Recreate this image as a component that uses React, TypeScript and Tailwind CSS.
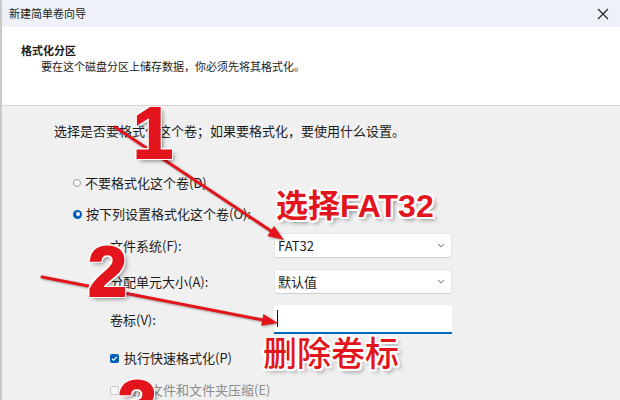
import React from 'react';

const cjk = "font-['Noto_Sans_CJK_SC','Noto_Sans',sans-serif]";
const redMark =
  "absolute text-[#e3151c] leading-none whitespace-nowrap [text-shadow:-2px_-2px_0_#fff,2px_-2px_0_#fff,-2px_2px_0_#fff,2px_2px_0_#fff,0_-2px_0_#fff,0_2px_0_#fff,-2px_0_0_#fff,2px_0_0_#fff,3px_3px_4px_rgba(0,0,0,0.45)]";
const digit = "font-['Liberation_Sans',sans-serif] font-bold [-webkit-text-stroke:2px_#e3151c]";

const Chevron = () => (
  <svg width="8" height="5" viewBox="0 0 8 5" className="text-gray-500">
    <path d="M1 1l3 3 3-3" fill="none" stroke="currentColor" strokeWidth="1" />
  </svg>
);

const Select = ({ value }: { value: string }) => (
  <div className="flex h-[25px] w-[178px] items-center justify-between rounded-[3px] border border-[#e6e6e6] border-b-[#cfcfcf] bg-white pl-[3px] pr-[6px] text-[13px] text-[#1b1b1b]">
    <span>{value}</span>
    <Chevron />
  </div>
);

const Annotations = () => (
  <>
    <svg className="pointer-events-none absolute inset-0 [filter:drop-shadow(1px_1px_1px_rgba(0,0,0,0.35))]" width="620" height="400">
      <line x1="115" y1="127" x2="271" y2="231" stroke="#e3151c" strokeWidth="3" strokeLinecap="round" />
      <polygon points="284,240 267.4,236.1 274,226.1" fill="#e3151c" />
      <line x1="42" y1="277" x2="263" y2="320" stroke="#e3151c" strokeWidth="3" strokeLinecap="round" />
      <polygon points="278,323 261.2,325.8 263.4,314" fill="#e3151c" />
    </svg>
    <div className={`${redMark} ${digit} left-[133px] top-[97px] text-[72px]`}>1</div>
    <div className={`${redMark} ${digit} left-[88px] top-[237px] text-[70px]`}>2</div>
    <div className={`${redMark} ${digit} left-[118px] top-[371px] text-[70px]`}>3</div>
    <div className={`${redMark} ${cjk} left-[276px] top-[187px] text-[32px] font-bold`}>
      选择<span className="font-['Liberation_Sans',sans-serif]">FAT32</span>
    </div>
    <div className={`${redMark} ${cjk} left-[263px] top-[335px] text-[34px] font-medium`}>删除卷标</div>
  </>
);

export default function App() {
  return (
    <div className={`relative h-[400px] w-[620px] overflow-hidden bg-[#f0f0f0] ${cjk} text-[#1b1b1b]`}>
      <div className="flex h-full">
        <div className="w-[2px] bg-[#c9c9c9]" />
        <div className="flex flex-1 flex-col">
          {/* title bar */}
          <div className="flex h-[27px] items-center justify-between bg-[#eef2f8] pl-[7px] pr-[11px]">
            <span className="text-[11px]">新建简单卷向导</span>
            <svg width="12" height="12" viewBox="0 0 12 12">
              <path d="M1 1l10 10M11 1L1 11" stroke="#222" strokeWidth="1.1" />
            </svg>
          </div>

          {/* header */}
          <div className="h-[79px] border-b border-[#d6d6d6] bg-white pl-[19px] pt-[15px] text-[11px] leading-[16px]">
            <div className="font-bold">格式化分区</div>
            <div className="pl-[20px]">要在这个磁盘分区上储存数据，你必须先将其格式化。</div>
          </div>

          {/* body */}
          <div className="flex-1 pl-[52px] pt-[15px] text-[13px] leading-[20px]">
            <div>选择是否要格式化这个卷；如果要格式化，要使用什么设置。</div>

            <div className="mt-[32px] flex items-center gap-[4px] pl-[19px]">
              <span className="h-[8px] w-[8px] rounded-full border border-[#9a9a9a] bg-white" />
              <span>不要格式化这个卷(D)</span>
            </div>
            <div className="mt-[11px] flex items-center gap-[4px] pl-[19px]">
              <span className="flex h-[9px] w-[9px] items-center justify-center rounded-full bg-[#005fb8]">
                <span className="h-[4px] w-[4px] rounded-full bg-white" />
              </span>
              <span>按下列设置格式化这个卷(O):</span>
            </div>

            <div className="mt-[9px] grid grid-cols-[164px_178px] items-center gap-y-[11px] pl-[56px]">
              <span>文件系统(F):</span>
              <Select value="FAT32" />
              <span>分配单元大小(A):</span>
              <Select value="默认值" />
              <span>卷标(V):</span>
              <div className="flex h-[29px] w-[178px] items-center rounded-t-[3px] border-b-2 border-[#0067c0] bg-white pl-[3px]">
                <span className="h-[17px] w-[1px] bg-[#111]" />
              </div>
            </div>

            <div className="mt-[14px] flex items-center gap-[5px] pl-[56px]">
              <span className="flex h-[9px] w-[9px] items-center justify-center rounded-[2px] bg-[#005fb8]">
                <svg width="7" height="7" viewBox="0 0 7 7">
                  <path d="M1 3.6l1.6 1.6L6 1.8" fill="none" stroke="#fff" strokeWidth="1.1" />
                </svg>
              </span>
              <span>执行快速格式化(P)</span>
            </div>
            <div className="mt-[12px] flex items-center gap-[5px] pl-[56px] text-[#8c8c8c]">
              <span className="h-[9px] w-[9px] rounded-[2px] border border-[#c8c8c8] bg-[#f7f7f7]" />
              <span>启用文件和文件夹压缩(E)</span>
            </div>
          </div>
        </div>
      </div>
      <Annotations />
    </div>
  );
}
